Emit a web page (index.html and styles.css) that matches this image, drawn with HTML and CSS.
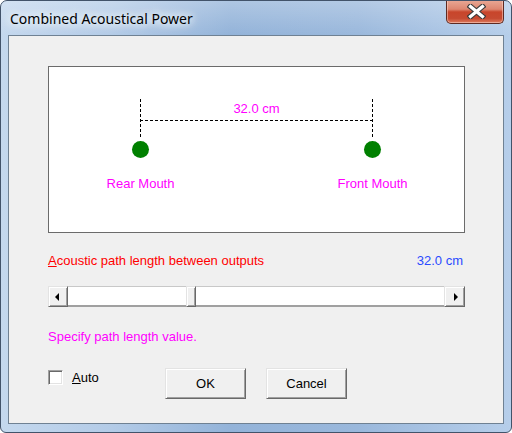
FILE: index.html
```html
<!DOCTYPE html>
<html lang="en">
<head>
    <meta charset="UTF-8">
    <meta name="viewport" content="width=device-width, initial-scale=1.0">
    <title>Combined Acoustical Power</title>
    <link rel="stylesheet" href="styles.css">
</head>
<body>
    <div class="window">
        <div class="title-bar">
            <span class="title">Combined Acoustical Power</span>
            <button class="close" aria-label="Close">
                <svg width="19" height="15" viewBox="0 0 19 15">
                    <path d="M3.5 2.5 L15.5 12.5 M15.5 2.5 L3.5 12.5" stroke="#3b3b3b" stroke-width="5.5" stroke-linecap="square" fill="none"/>
                    <path d="M3.5 2.5 L15.5 12.5 M15.5 2.5 L3.5 12.5" stroke="#ffffff" stroke-width="3.2" stroke-linecap="square" fill="none"/>
                </svg>
            </button>
        </div>
        <div class="client">
            <div class="diagram">
                <svg width="415" height="165" viewBox="0 0 415 165">
                    <g stroke="#000" stroke-width="1" stroke-dasharray="3 2" shape-rendering="crispEdges">
                        <line x1="91.5" y1="32" x2="91.5" y2="72"/>
                        <line x1="323.5" y1="32" x2="323.5" y2="72"/>
                        <line x1="91" y1="53.5" x2="324" y2="53.5"/>
                    </g>
                    <circle cx="91.5" cy="82.5" r="8.5" fill="#008000"/>
                    <circle cx="323.5" cy="82.5" r="8.5" fill="#008000"/>
                    <g class="diagram-text">
                        <text x="207.5" y="46">32.0 cm</text>
                        <text x="91.5" y="121">Rear Mouth</text>
                        <text x="323.5" y="121">Front Mouth</text>
                    </g>
                </svg>
            </div>

            <div class="length-row">
                <span class="length-label"><u>A</u>coustic path length between outputs</span>
                <span class="length-value">32.0 cm</span>
            </div>

            <div class="scrollbar">
                <div class="raised arrow-btn"><span class="arrow-left"></span></div>
                <div class="track track-before"></div>
                <div class="raised thumb"></div>
                <div class="track track-after"></div>
                <div class="raised arrow-btn arrow-btn-right"><span class="arrow-right"></span></div>
            </div>

            <p class="hint">Specify path length value.</p>

            <div class="bottom-row">
                <label class="auto">
                    <span class="checkbox"></span>
                    <span><u>A</u>uto</span>
                </label>
                <button class="raised push">OK</button>
                <button class="raised push">Cancel</button>
            </div>
        </div>
    </div>
</body>
</html>
```

FILE: styles.css
```css
    body {
        margin: 0;
        padding: 0;
        width: 512px;
        height: 433px;
        overflow: hidden;
        background-color: #ffffff;
        font-family: "Liberation Sans", Arial, sans-serif;
        font-size: 13px;
    }

    .window {
        box-sizing: border-box;
        width: 512px;
        height: 433px;
        border: 1px solid #42536a;
        border-radius: 7px 7px 6px 6px;
        background: linear-gradient(to right, #c4d8ee 0%, #b3cbe7 22%, #93b3d9 45%, #9ab8dc 70%, #b6ceea 100%);
        display: flex;
        flex-direction: column;
        overflow: hidden;
    }

    .title-bar {
        height: 34px;
        display: flex;
        justify-content: space-between;
        align-items: flex-start;
        padding: 0 7px 0 9px;
        background: linear-gradient(to bottom, rgba(255, 255, 255, 0.25), rgba(255, 255, 255, 0));
    }

    .title {
        margin-top: 7px;
        font-family: "Noto Sans", "Open Sans", sans-serif;
        font-size: 14px;
        line-height: 22px;
        color: #000;
        text-shadow: 0 0 6px #eef5fc, 0 0 10px #eef5fc, 0 0 14px #eef5fc;
    }

    .close {
        width: 58px;
        height: 24px;
        margin-top: -1px;
        padding: 0;
        border: 1px solid #5e2a22;
        border-top: none;
        border-radius: 0 0 5px 5px;
        background: linear-gradient(to bottom, #e9a996 0%, #dd8670 40%, #c8452b 52%, #c64a31 80%, #de7b5e 100%);
        box-shadow: inset 0 0 0 1px rgba(255, 220, 210, 0.5);
        display: flex;
        justify-content: center;
        align-items: center;
    }

    .close svg {
        display: block;
        margin-left: 2px;
    }

    .client {
        flex: 1;
        margin: 0 7px 8px 7px;
        border: 1px solid #6f8193;
        background-color: #f0f0f0;
        padding: 30px 38px 0 39px;
    }

    .diagram {
        height: 165px;
        border: 1px solid #6b6b6b;
        background-color: #ffffff;
    }

    .diagram svg {
        display: block;
    }

    .diagram-text {
        font-family: "Liberation Sans", Arial, sans-serif;
        font-size: 13px;
        fill: #ff00ff;
        text-anchor: middle;
    }

    .length-row {
        display: flex;
        justify-content: space-between;
        margin-top: 20px;
        line-height: 15px;
    }

    .length-label {
        color: #ff0000;
    }

    .length-value {
        padding-right: 2px;
        color: #2a4bff;
    }

    .raised {
        box-sizing: border-box;
        background-color: #f0f0f0;
        border: 1px solid;
        border-color: #e3e3e3 #696969 #696969 #e3e3e3;
        box-shadow: inset 1px 1px #ffffff, inset -1px -1px #a0a0a0;
    }

    .scrollbar {
        display: flex;
        height: 21px;
        margin-top: 18px;
    }

    .arrow-btn {
        width: 20px;
        height: 21px;
        display: flex;
        justify-content: center;
        align-items: center;
    }

    .arrow-btn-right {
        width: 21px;
    }

    .arrow-left {
        border-top: 4px solid transparent;
        border-bottom: 4px solid transparent;
        border-right: 4px solid #000;
        margin-right: 3px;
    }

    .arrow-right {
        border-top: 4px solid transparent;
        border-bottom: 4px solid transparent;
        border-left: 4px solid #000;
        margin-left: 2px;
    }

    .track {
        box-sizing: border-box;
        background-color: #ffffff;
        border-top: 1px solid #c8c8c8;
        border-bottom: 2px solid #a0a0a0;
    }

    .track-before {
        width: 118px;
    }

    .track-after {
        flex: 1;
    }

    .thumb {
        width: 10px;
        height: 21px;
    }

    .hint {
        margin: 22px 0 0 0;
        line-height: 15px;
        color: #ff00ff;
    }

    .bottom-row {
        display: flex;
        align-items: flex-start;
        margin-top: 24px;
    }

    .auto {
        width: 117px;
        display: flex;
        align-items: center;
        gap: 9px;
        margin-top: 2px;
        line-height: 15px;
        color: #000;
    }

    .checkbox {
        box-sizing: border-box;
        width: 15px;
        height: 15px;
        background-color: #ffffff;
        border: 1px solid;
        border-color: #a0a0a0 #ffffff #ffffff #a0a0a0;
        box-shadow: inset 1px 1px #696969, inset -1px -1px #e3e3e3;
    }

    .push {
        width: 81px;
        height: 31px;
        margin-right: 20px;
        padding: 0;
        font-family: "Liberation Sans", Arial, sans-serif;
        font-size: 13px;
        color: #000;
    }
```
